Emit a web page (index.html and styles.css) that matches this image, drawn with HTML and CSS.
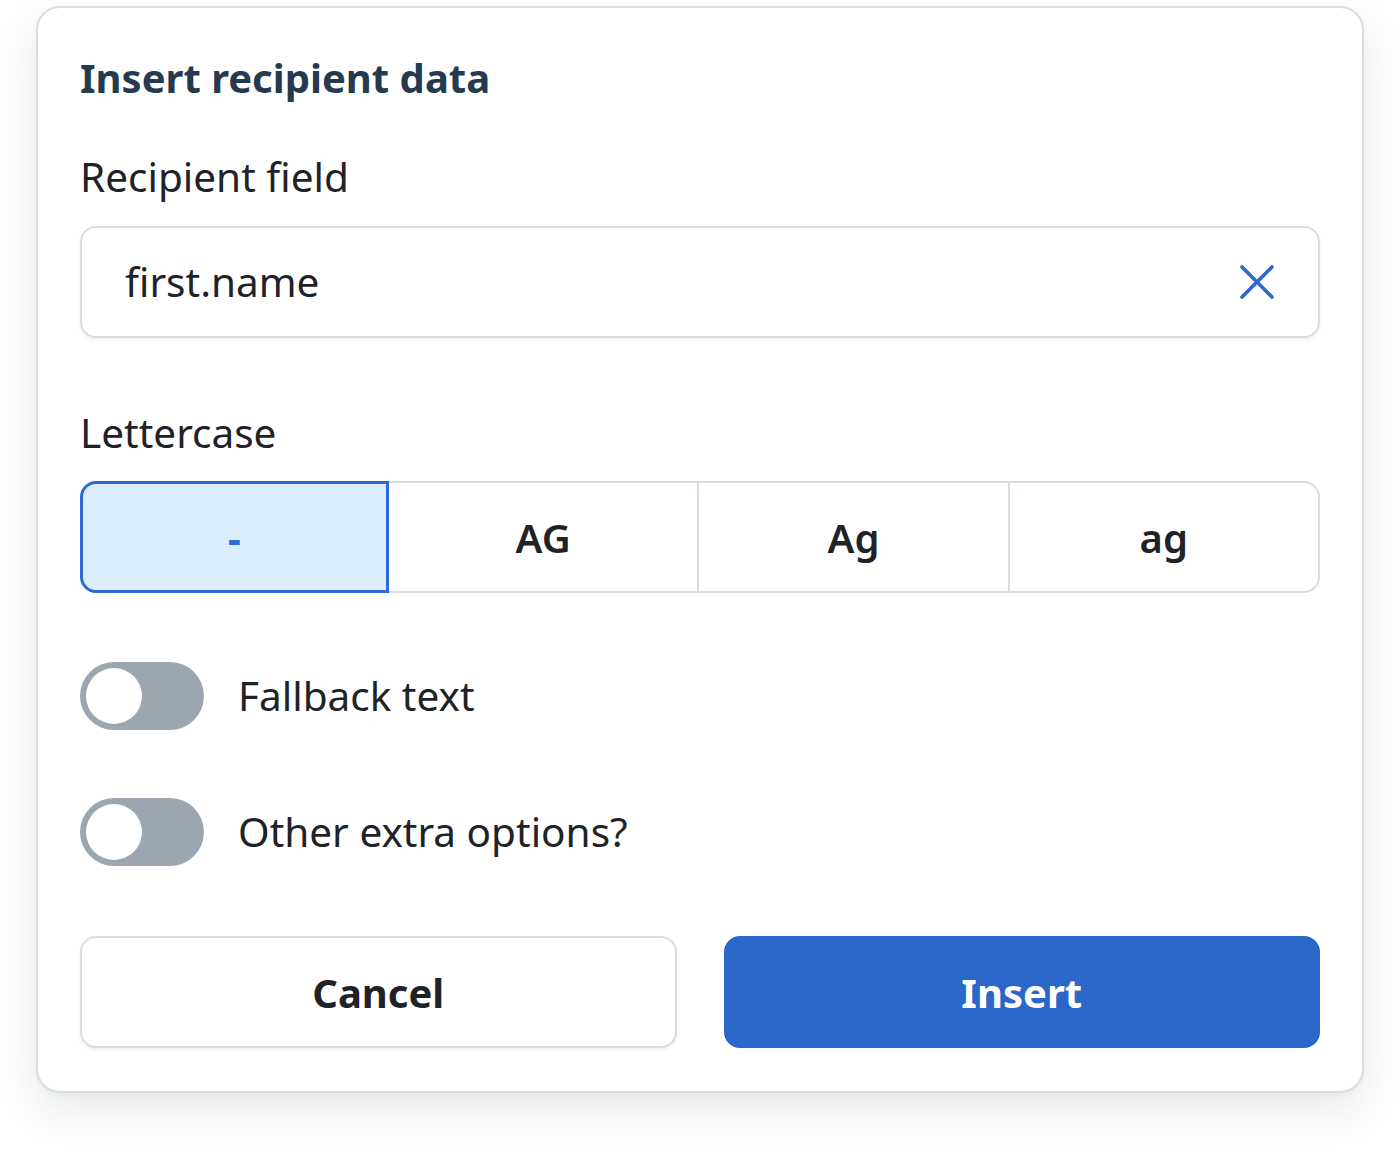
FILE: index.html
```html
<!DOCTYPE html>
<html lang="en">
<head>
<meta charset="utf-8">
<title>Insert recipient data</title>
<link rel="stylesheet" href="styles.css">
</head>
<body>
<div class="page">
  <div class="card">
    <h1 class="title">Insert recipient data</h1>
    <div class="label label-field">Recipient field</div>
    <div class="input">
      <span class="input-value">first.name</span>
      <svg class="clear" width="34" height="34" viewBox="0 0 34 34" aria-hidden="true">
        <path d="M2 2 L32 32 M32 2 L2 32" stroke="#2c67cb" stroke-width="3.6" stroke-linecap="round" fill="none"/>
      </svg>
    </div>
    <div class="label label-case">Lettercase</div>
    <div class="segmented">
      <div class="seg seg-selected">-</div>
      <div class="seg">AG</div>
      <div class="seg">Ag</div>
      <div class="seg">ag</div>
    </div>
    <div class="toggle-row">
      <span class="toggle"><span class="knob"></span></span>
      <span class="toggle-label">Fallback text</span>
    </div>
    <div class="toggle-row">
      <span class="toggle"><span class="knob"></span></span>
      <span class="toggle-label">Other extra options?</span>
    </div>
    <div class="actions">
      <button class="btn btn-cancel">Cancel</button>
      <button class="btn btn-insert">Insert</button>
    </div>
  </div>
</div>
</body>
</html>
```
FILE: styles.css
```css
* { box-sizing: border-box; }
html, body { margin: 0; padding: 0; background: #ffffff; }
body {
  font-family: "Noto Sans", "Open Sans", "Liberation Sans", sans-serif;
  color: #1f2226;
}
.page {
  padding: 6px 36px 60px 36px;
}
.card {
  width: 1328px;
  border: 2px solid #d6dde4;
  border-radius: 24px;
  background: #ffffff;
  padding: 44px 42px 43px 42px;
  box-shadow: 0 18px 40px rgba(30, 40, 50, 0.10), 0 2px 6px rgba(30, 40, 50, 0.04);
}
.title {
  margin: 0;
  font-size: 40px;
  line-height: 52px;
  font-weight: 700;
  color: #253a4f;
}
.label {
  font-size: 40.5px;
  line-height: 52px;
  color: #1f2226;
}
.label-field { margin-top: 47px; }
.label-case { margin-top: 69px; }
.input {
  margin-top: 23px;
  height: 112px;
  border: 2px solid #d6dde4;
  border-radius: 16px;
  display: flex;
  align-items: center;
  justify-content: space-between;
  padding: 0 44px 0 43px;
  box-shadow: 0 2px 3px rgba(30, 40, 50, 0.06);
}
.input-value {
  font-size: 40.5px;
  line-height: 52px;
  color: #1f2226;
}
.clear { display: block; }
.segmented {
  margin-top: 22px;
  height: 112px;
  display: flex;
}
.seg {
  flex: 1;
  display: flex;
  align-items: center;
  justify-content: center;
  border: 2px solid #d6dde4;
  margin-left: -2px;
  font-size: 40px;
  font-weight: 600;
  color: #1f2226;
  background: #ffffff;
}
.seg:first-child { margin-left: 0; border-radius: 16px 0 0 16px; flex: 0 0 309px; }
.seg:last-child { border-radius: 0 16px 16px 0; }
.seg-selected {
  position: relative;
  z-index: 1;
  border: 3px solid #2c6bd3;
  background: #dcedfc;
  color: #2c6bd3;
  font-weight: 700;
}
.toggle-row {
  display: flex;
  align-items: center;
  gap: 34px;
  height: 68px;
  margin-top: 68px;
}
.segmented + .toggle-row { margin-top: 69px; }
.toggle {
  width: 124px;
  height: 68px;
  border-radius: 34px;
  background: #9ba6b0;
  padding: 6px;
  display: flex;
  align-items: center;
  flex-shrink: 0;
}
.knob {
  width: 56px;
  height: 56px;
  border-radius: 50%;
  background: #ffffff;
}
.toggle-label {
  font-size: 40.5px;
  line-height: 52px;
  color: #1f2226;
}
.actions {
  margin-top: 70px;
  display: flex;
  gap: 47px;
}
.btn {
  flex: 1;
  height: 112px;
  border-radius: 16px;
  font-family: inherit;
  font-size: 40px;
  font-weight: 700;
  cursor: pointer;
}
.btn-cancel {
  background: #ffffff;
  border: 2px solid #d6dde4;
  color: #1f2226;
  box-shadow: 0 2px 3px rgba(30, 40, 50, 0.06);
}
.btn-insert {
  background: #2a67c9;
  border: 2px solid #2a67c9;
  color: #ffffff;
}
```
